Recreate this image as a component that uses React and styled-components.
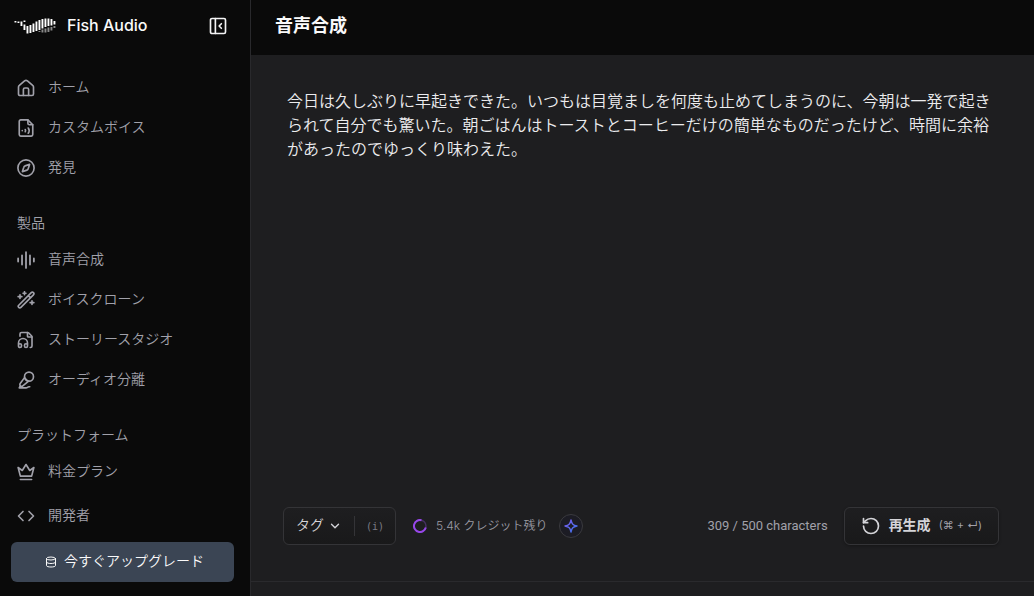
import React, { useState } from "react";
import styled, { createGlobalStyle } from "styled-components";
import { ChevronDown, Code, FileHeadphone, RotateCcw } from "lucide-react";

const GlobalStyle = createGlobalStyle`
  * {
    box-sizing: border-box;
  }
  body {
    margin: 0;
    background-color: #0a0a0a;
    font-family: Inter, "Noto Sans CJK JP", sans-serif;
    color: #f4f4f5;
  }
  button,
  textarea {
    font-family: inherit;
  }
`;

const Page = styled.div`
  display: flex;
  height: 100vh;
  overflow: hidden;
`;

const Sidebar = styled.aside`
  display: flex;
  flex-direction: column;
  flex: 0 0 251px;
  border-right: 1px solid #29292c;
  background-color: #0a0a0a;
`;

const SidebarTop = styled.div`
  display: flex;
  align-items: center;
  height: 52px;
  padding: 0 23px 0 14px;
`;

const Brand = styled.a`
  display: flex;
  align-items: center;
  gap: 11px;
  flex: 1;
  color: #fafafa;
  font-size: 16px;
  font-weight: 500;
  text-decoration: none;
`;

const BrandName = styled.span`
  padding-bottom: 2px;
`;

const IconButton = styled.button`
  display: flex;
  padding: 0;
  border: 0;
  background: none;
  color: #f4f4f5;
  cursor: pointer;
`;

const Label = styled.span`
  padding-bottom: 4px;
`;

const Nav = styled.nav`
  flex: 1;
  padding-top: 16px;
`;

const NavHeading = styled.h2`
  height: 36px;
  margin: 16px 0 0;
  padding: 0 17px;
  color: #a1a1aa;
  font-size: 14px;
  font-weight: 350;
  line-height: 38px;
`;

const NavItem = styled.a`
  display: flex;
  align-items: center;
  gap: 13px;
  height: ${(props) => (props.$tall ? 48 : 40)}px;
  padding: 0 17px;
  color: #a1a1aa;
  font-size: 14px;
  font-weight: 350;
  text-decoration: none;
  svg {
    flex: none;
  }
`;

const UpgradeButton = styled.button`
  display: flex;
  align-items: center;
  justify-content: center;
  gap: 7px;
  height: 40px;
  margin: 0 16px 14px 11px;
  padding: 0 0 0 4px;
  border: 0;
  border-radius: 6px;
  background-color: #3b4554;
  color: #fafafa;
  font-size: 14px;
  font-weight: 350;
  cursor: pointer;
`;

const Main = styled.main`
  display: flex;
  flex-direction: column;
  flex: 1;
  min-width: 0;
`;

const Header = styled.header`
  display: flex;
  align-items: center;
  height: 55px;
  padding: 0 24px 3px;
`;

const Title = styled.h1`
  margin: 0;
  font-size: 18px;
  line-height: 28px;
  font-weight: 700;
  color: #fafafa;
`;

const Editor = styled.section`
  display: flex;
  flex-direction: column;
  flex: 1;
  background-color: #1e1e20;
`;

const TextArea = styled.textarea`
  flex: 1;
  width: 100%;
  padding: 34px 36px 0;
  border: 0;
  outline: 0;
  resize: none;
  background: none;
  color: #ececee;
  font-size: 16px;
  font-weight: 350;
  line-height: 24px;
`;

const Toolbar = styled.div`
  display: flex;
  align-items: center;
  padding: 0 35px 36px 32px;
`;

const Player = styled.footer`
  height: 15px;
  border-top: 1px solid #2a2a2d;
`;

const Panel = styled.div`
  display: flex;
  align-items: center;
  height: 38px;
  border: 1px solid #343437;
  border-radius: 6px;
  background: linear-gradient(#1e1e20, #19191a);
`;

const TagButton = styled.button`
  display: flex;
  align-items: center;
  gap: 4px;
  padding: 0 12px;
  border: 0;
  background: none;
  color: #d4d4d8;
  font-size: 14px;
  font-weight: 350;
  cursor: pointer;
`;

const HelpButton = styled.button`
  height: 20px;
  padding: 0 11px;
  border: 0;
  border-left: 1px solid #343437;
  background: none;
  color: #7c7c86;
  font-family: "DejaVu Sans Mono", monospace;
  font-size: 10px;
  cursor: pointer;
`;

const Credits = styled.div`
  display: flex;
  align-items: center;
  gap: 9px;
  flex: 1;
  margin-left: 17px;
  color: #9a9aa3;
  font-size: 12px;
  font-weight: 350;
`;

const SparkButton = styled.button`
  display: flex;
  align-items: center;
  justify-content: center;
  width: 24px;
  height: 24px;
  margin-left: 2px;
  padding: 0;
  border: 1px solid #3a3a3e;
  border-radius: 50%;
  background-color: #1c1c24;
  cursor: pointer;
`;

const Counter = styled.span`
  margin-right: 16px;
  padding-bottom: 2px;
  color: #a1a1aa;
  font-family: Roboto, sans-serif;
  font-size: 13px;
`;

const GenerateButton = styled.button`
  display: flex;
  align-items: center;
  gap: 8px;
  height: 38px;
  padding: 0 16px;
  border: 1px solid #343437;
  border-radius: 6px;
  background: linear-gradient(#1e1e20, #19191a);
  box-shadow: 0 1px 3px rgba(0, 0, 0, 0.3);
  color: #d4d4d8;
  font-size: 14px;
  font-weight: 700;
  cursor: pointer;
`;

const Shortcut = styled.span`
  padding-bottom: 2px;
  color: #a1a1aa;
  font-size: 11px;
  font-weight: 400;
`;

const Icon = ({ size = 18, width = 2.2, children }) => (
  <svg
    width={size}
    height={size}
    viewBox="0 0 24 24"
    fill="none"
    stroke="currentColor"
    strokeWidth={width}
    strokeLinecap="round"
    strokeLinejoin="round"
    aria-hidden="true"
  >
    {children}
  </svg>
);

// x, top, bottom of every bar in the fish
const bars = [
  [1, 3, 4.5],
  [4, 3.5, 5],
  [7, 3.5, 8],
  [10, 2.5, 4],
  [10, 6.5, 12],
  [13, 8, 15.5],
  [16, 7, 15],
  [19, 5.5, 14],
  [22, 3.5, 13],
  [25, 2, 12],
  [28, 1, 10.5],
  [31, 0.5, 9],
  [34, 0.5, 8],
  [37, 1, 7.5],
  [40, 3, 6.5],
];

const fins = [
  [25, 13, 14],
  [28, 11.5, 14.5],
  [31, 10.5, 14.5],
  [34, 9.5, 14],
  [37, 9, 12.5],
  [40, 8, 10],
];

const Logo = () => (
  <svg width="42" height="17" viewBox="0 0 42 17" aria-hidden="true">
    {bars.map(([x, top, bottom]) => (
      <rect key={`${x}-${top}`} x={x - 0.5} y={top} width="1.9" height={bottom - top} fill="#fff" />
    ))}
    {fins.map(([x, top, bottom]) => (
      <rect key={x} x={x - 0.5} y={top} width="1.9" height={bottom - top} fill="#8a8a8a" />
    ))}
  </svg>
);

const HomeIcon = () => (
  <Icon>
    <path d="M2 10.8a3 3 0 0 1 1.1-2.3l7-6a3 3 0 0 1 3.8 0l7 6a3 3 0 0 1 1.1 2.3V20a2 2 0 0 1-2 2H4a2 2 0 0 1-2-2z" />
    <path d="M8.5 22v-8a2 2 0 0 1 2-2h3a2 2 0 0 1 2 2v8" />
  </Icon>
);

const VoiceFileIcon = () => (
  <Icon>
    <path d="M14.5 1.2H5a2 2 0 0 0-2 2v17.6a2 2 0 0 0 2 2h14a2 2 0 0 0 2-2V7.7z" />
    <path d="M14.5 1.2v4.5a2 2 0 0 0 2 2H21" />
    <path d="M7 15.5v.1M11 14a3 3 0 0 1 0 3M15 12a6 6 0 0 1 0 7" />
  </Icon>
);

const CompassIcon = () => (
  <Icon>
    <circle cx="12" cy="12" r="10.8" />
    <path d="M16.8 7.2l-1.9 5.9a2.5 2.5 0 0 1-1.7 1.7L7.2 16.8l1.9-5.9a2.5 2.5 0 0 1 1.7-1.7z" />
  </Icon>
);

const WaveIcon = () => (
  <Icon width={2.4}>
    <path d="M1.5 10v4M6.7 6v12M12 1.5v21M17.3 6v12M22.5 10v4" />
  </Icon>
);

const WandIcon = () => (
  <Icon>
    <path d="M19 2.2a1.9 1.9 0 0 1 2.9 2.9L5.2 21.9a1.9 1.9 0 0 1-2.9-2.9zM15 6.2l3 3" />
    <path d="M10 1v4M8 3h4M4 5v5M1.5 7.5h5M20 13v5M17.5 15.5h5" />
  </Icon>
);

const MicIcon = () => (
  <Icon>
    <circle cx="16" cy="7.5" r="6" />
    <path d="M10.3 8.5L4 17a2.5 2.5 0 0 0 3.3 3.3L15.5 13.6M11 10l3.5 3.5M4.5 19.5l-1.5 3h9c2 0 2-1.5 4-1.5h1" />
  </Icon>
);

const CrownIcon = () => (
  <Icon>
    <path d="M4.5 17.5L1.5 6l5.5 4 5-8 5 8 5.5-4-3 11.5zM4.5 22h15" />
  </Icon>
);

const PanelIcon = () => (
  <Icon>
    <rect x="2" y="2" width="20" height="20" rx="2" />
    <path d="M8.5 2v20M16.5 9l-3 3 3 3" />
  </Icon>
);

const CoinsIcon = () => (
  <Icon size={12} width={2}>
    <ellipse cx="12" cy="5" rx="9" ry="3" />
    <path d="M3 5v14c0 2 4 3 9 3s9-1 9-3V5M3 12c0 2 4 3 9 3s9-1 9-3" />
  </Icon>
);

const CreditRing = () => (
  <svg width="14" height="14" viewBox="0 0 14 14" fill="none" aria-hidden="true">
    <circle cx="7" cy="7" r="6" stroke="#44305f" strokeWidth="1.5" />
    <path d="M12.8 8.5A6 6 0 1 1 8.5 1.2" stroke="#9747e8" strokeWidth="2" />
  </svg>
);

const SparkIcon = () => (
  <svg width="14" height="14" viewBox="0 0 14 14" fill="none" aria-hidden="true">
    <defs>
      <linearGradient id="spark" x1="0" y1="0" x2="1" y2="1">
        <stop offset="0" stopColor="#7c5cf0" />
        <stop offset="1" stopColor="#3b72e6" />
      </linearGradient>
    </defs>
    <path
      d="M7 1c.8 4 2 5.2 6 6-4 .8-5.2 2-6 6-.8-4-2-5.2-6-6 4-.8 5.2-2 6-6z"
      stroke="url(#spark)"
      strokeWidth="1.4"
      strokeLinejoin="round"
    />
  </svg>
);

const groups = [
  {
    items: [
      { label: "ホーム", icon: <HomeIcon /> },
      { label: "カスタムボイス", icon: <VoiceFileIcon /> },
      { label: "発見", icon: <CompassIcon /> },
    ],
  },
  {
    heading: "製品",
    items: [
      { label: "音声合成", icon: <WaveIcon /> },
      { label: "ボイスクローン", icon: <WandIcon /> },
      { label: "ストーリースタジオ", icon: <FileHeadphone size={18} strokeWidth={2.2} /> },
      { label: "オーディオ分離", icon: <MicIcon /> },
    ],
  },
  {
    heading: "プラットフォーム",
    items: [
      { label: "料金プラン", icon: <CrownIcon /> },
      { label: "開発者", icon: <Code size={18} strokeWidth={2.2} />, tall: true },
    ],
  },
];

export default function App() {
  const [text, setText] = useState(
    "今日は久しぶりに早起きできた。いつもは目覚ましを何度も止めてしまうのに、今朝は一発で起きられて自分でも驚いた。朝ごはんはトーストとコーヒーだけの簡単なものだったけど、時間に余裕があったのでゆっくり味わえた。"
  );

  return (
    <Page lang="ja">
      <GlobalStyle />
      <Sidebar>
        <SidebarTop>
          <Brand href="#">
            <Logo />
            <BrandName>Fish Audio</BrandName>
          </Brand>
          <IconButton aria-label="サイドバーを閉じる">
            <PanelIcon />
          </IconButton>
        </SidebarTop>
        <Nav>
          {groups.map((group, index) => (
            <div key={index}>
              {group.heading && <NavHeading>{group.heading}</NavHeading>}
              {group.items.map((item) => (
                <NavItem key={item.label} href="#" $tall={item.tall}>
                  {item.icon}
                  <Label>{item.label}</Label>
                </NavItem>
              ))}
            </div>
          ))}
        </Nav>
        <UpgradeButton>
          <CoinsIcon />
          <Label>今すぐアップグレード</Label>
        </UpgradeButton>
      </Sidebar>
      <Main>
        <Header>
          <Title>音声合成</Title>
        </Header>
        <Editor>
          <TextArea
            aria-label="テキスト"
            spellCheck="false"
            value={text}
            onChange={(e) => setText(e.target.value)}
          />
          <Toolbar>
            <Panel>
              <TagButton>
                <Label>タグ</Label>
                <ChevronDown size={14} strokeWidth={2.4} />
              </TagButton>
              <HelpButton>(i)</HelpButton>
            </Panel>
            <Credits>
              <CreditRing />
              <Label>5.4k クレジット残り</Label>
              <SparkButton aria-label="クレジットを追加">
                <SparkIcon />
              </SparkButton>
            </Credits>
            <Counter>309 / 500 characters</Counter>
            <GenerateButton>
              <RotateCcw size={20} />
              <Label>再生成</Label>
              <Shortcut>(⌘ + ↵)</Shortcut>
            </GenerateButton>
          </Toolbar>
          <Player />
        </Editor>
      </Main>
    </Page>
  );
}
